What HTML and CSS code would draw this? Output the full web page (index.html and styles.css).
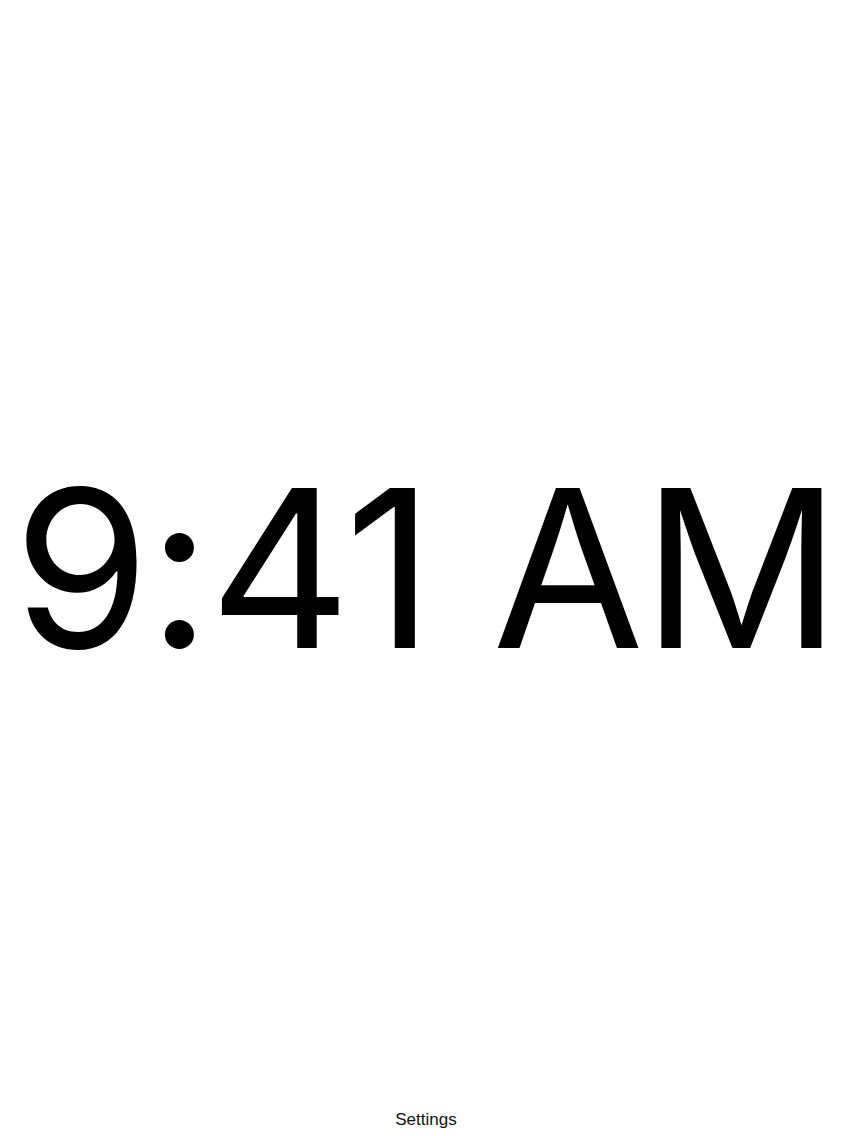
FILE: index.html
```html
<!DOCTYPE html>
<html>
<head>
<meta charset="utf-8">
<link rel="stylesheet" href="styles.css">
</head>
<body>
<div class="screen">
  <div class="top"></div>
  <div class="clock">9:41 AM</div>
  <div class="bottom">
    <div class="settings">Settings</div>
  </div>
</div>
</body>
</html>
```
FILE: styles.css
```css
html, body {
  margin: 0;
  padding: 0;
  background: #ffffff;
}
.screen {
  height: 100vh;
  display: grid;
  grid-template-rows: 1fr auto 1fr;
  font-family: "Liberation Sans", Arial, sans-serif;
  color: #000;
}
.clock {
  font-family: Inter, "Liberation Sans", sans-serif;
  font-weight: 400;
  font-size: 220px;
  line-height: 1;
  letter-spacing: -2px;
  text-align: center;
  white-space: nowrap;
}
.bottom {
  display: flex;
  flex-direction: column;
  justify-content: flex-end;
  align-items: center;
}
.settings {
  font-size: 17px;
  line-height: 20px;
  padding-bottom: 6px;
  color: #111;
}
```
